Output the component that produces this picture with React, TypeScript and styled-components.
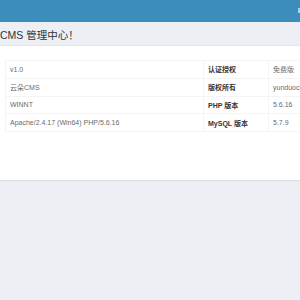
import React from "react";
import styled, { createGlobalStyle } from "styled-components";

const Global = createGlobalStyle`
  html, body { margin: 0; padding: 0; background: #ecf0f5; overflow: hidden; }
  body { font-family: "Liberation Sans", "Noto Sans CJK SC", Arial, sans-serif; }
  #root { width: 300px; height: 300px; overflow: hidden; }
`;

const Page = styled.div`
  width: 300px;
  height: 300px;
  background: #ecf0f5;
  display: flex;
  flex-direction: column;
  overflow: hidden;
`;

const TopBar = styled.div`
  height: 22px;
  flex: none;
  background: #3c8dbc;
  display: flex;
  justify-content: flex-end;
  align-items: flex-start;
`;

const TopTab = styled.div`
  width: 2px;
  height: 5px;
  margin-top: 8px;
  background: #9fd4ee;
`;

const TitleBar = styled.div`
  height: 23px;
  flex: none;
  background: #ecf0f5;
  border-bottom: 1px solid #e2e5ea;
  display: flex;
  align-items: center;
`;

const Title = styled.h1`
  margin: 0;
  font-size: 10.5px;
  font-weight: normal;
  color: #333;
  white-space: nowrap;
  padding-top: 1px;
  padding-left: 0;
`;

const Panel = styled.div`
  height: 134px;
  flex: none;
  background: #fff;
  box-shadow: 0 1px 1px rgba(0, 0, 0, 0.07);
  padding: 14px 0 0 5px;
  box-sizing: border-box;
  overflow: hidden;
`;

const Table = styled.table`
  border-collapse: collapse;
  width: 360px;
  table-layout: fixed;
  font-size: 7px;
`;

const Row = styled.tr`
  height: 17.75px;
`;

const Cell = styled.td<{ $bold?: boolean }>`
  border: 1px solid #f4f4f4;
  padding: 0 0 0 4px;
  color: ${(p) => (p.$bold ? "#333" : "#6a6a6a")};
  font-weight: ${(p) => (p.$bold ? "bold" : "normal")};
  white-space: nowrap;
  overflow: hidden;
  vertical-align: middle;
`;

const rows = [
  ["v1.0", "认证授权", "免费版"],
  ["云朵CMS", "版权所有", "yunduocms.com"],
  ["WINNT", "PHP 版本", "5.6.16"],
  ["Apache/2.4.17 (Win64) PHP/5.6.16", "MySQL 版本", "5.7.9"],
];

export default function App() {
  return (
    <>
      <Global />
      <Page>
        <TopBar>
          <TopTab />
        </TopBar>
        <TitleBar>
          <Title>CMS 管理中心！</Title>
        </TitleBar>
        <Panel>
          <Table>
            <colgroup>
              <col style={{ width: 198 }} />
              <col style={{ width: 65 }} />
              <col />
            </colgroup>
            <tbody>
              {rows.map((r, i) => (
                <Row key={i}>
                  <Cell>{r[0]}</Cell>
                  <Cell $bold>{r[1]}</Cell>
                  <Cell>{r[2]}</Cell>
                </Row>
              ))}
            </tbody>
          </Table>
        </Panel>
      </Page>
    </>
  );
}
